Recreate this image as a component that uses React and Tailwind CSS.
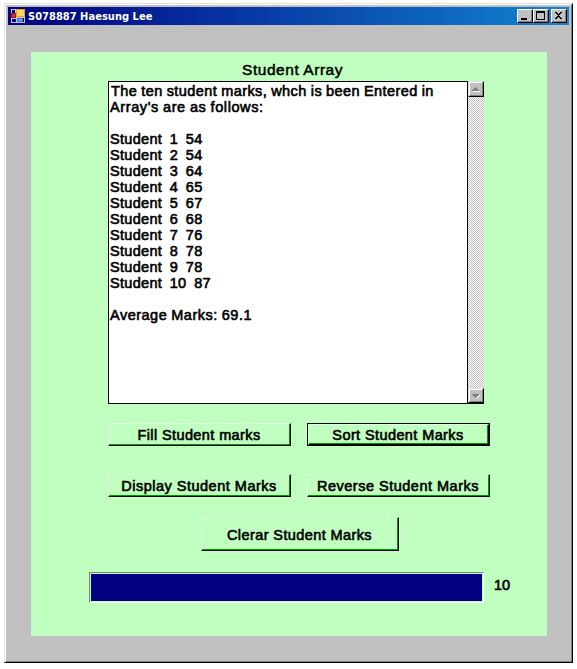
import React from 'react';

const marks = [54, 54, 64, 65, 67, 68, 76, 78, 78, 87];

function Button({ className, label, isDefault = false }) {
  const face = (
    <div className="h-full border border-t-[#e0ffe0] border-l-[#e0ffe0] border-r-black border-b-black">
      <div className="flex h-full items-center justify-center border-r border-b border-[#009800]">
        <span className="pt-0.5">{label}</span>
      </div>
    </div>
  );
  return (
    <button className={`block whitespace-pre ${isDefault ? 'border border-black' : ''} ${className}`}>{face}</button>
  );
}

function CaptionButton({ children }) {
  return (
    <button className="h-[14px] w-4 border border-t-white border-l-white border-r-black border-b-black bg-[#c0c0c0]">
      <div className="h-full border-r border-b border-[#808080]">
        <svg className="block" width="13" height="11" shapeRendering="crispEdges">{children}</svg>
      </div>
    </button>
  );
}

function ScrollButton({ up = false, className }) {
  return (
    <button className={`block w-4 border border-t-[#dfdfdf] border-l-[#dfdfdf] border-r-black border-b-black bg-[#c0c0c0] ${className}`}>
      <div className="h-full border border-t-white border-l-white border-r-[#808080] border-b-[#808080]">
        <svg className="block" width="12" height="11" shapeRendering="crispEdges">
          {up ? (
            <>
              <path d="M3 8h7v1H3z" fill="#fff" />
              <path d="M5 4h1v1h1v1h1v1h1v1H2V7h1V6h1V5h1z" fill="#808080" />
            </>
          ) : (
            <>
              <path d="M9 5h1v1H9v1H8v1H7v1H6V8h1V7h1V6h1z" fill="#fff" />
              <path d="M2 4h7v1H8v1H7v1H6v1H5V7H4V6H3V5H2z" fill="#808080" />
            </>
          )}
        </svg>
      </div>
    </button>
  );
}

export default function App() {
  return (
    <div className="h-[669px] w-[577px] bg-white pt-[3px] pl-1 font-['Liberation_Sans',Arial,sans-serif] text-[14.5px] leading-4 text-black">
      <div className="h-[660px] w-[569px] border border-t-[#dfdfdf] border-l-[#dfdfdf] border-r-black border-b-black">
        <div className="h-full border border-t-white border-l-white border-r-[#808080] border-b-[#808080] bg-[#c0c0c0] px-0.5 pt-0.5">
          <header className="flex h-[18px] w-[561px] items-center bg-linear-to-r/srgb from-[#000080] to-[#1084d0] pr-0.5 pl-[3px]">
            <svg width="14" height="14" shapeRendering="crispEdges">
              <path d="M0 0h14v14H0z" fill="#c8c8d8" />
              <path d="M1 1h3v3H1z" fill="#000080" />
              <path d="M0 4h5v5H0z" fill="#a01818" />
              <path d="M1 5h3v3H1z" fill="#d83030" />
              <path d="M1 10h4v3H1z" fill="#000080" />
              <path d="M5 0h9v8H5z" fill="#e8a020" />
              <path d="M6 1h7v6H6z" fill="#ffd860" />
              <path d="M6 9h6v4H6z" fill="#3070d0" />
              <path d="M7 10h4v2H7z" fill="#70a8f0" />
              <path d="M12 9h1v4h-1z" fill="#000080" />
            </svg>
            <h1 className="mt-px ml-[3px] font-['DejaVu_Sans_Condensed','DejaVu_Sans',sans-serif] text-[11px] font-bold tracking-[0.03px] whitespace-nowrap text-white">S078887 Haesung Lee</h1>
            <div className="ml-auto flex">
              <CaptionButton><path d="M3 8h6v2H3z" /></CaptionButton>
              <CaptionButton><path d="M2 1h9v9H2zM3 3v6h7V3z" fillRule="evenodd" /></CaptionButton>
              <div className="w-0.5" />
              <CaptionButton>
                <path d="M3 2h2v1h1v1h1V3h1V2h2v1H9v1H8v1H7v1h1v1h1v1h1v1H8V8H7V7H6v1H5v1H3V8h1V7h1V6h1V5H5V4H4V3H3z" />
              </CaptionButton>
            </div>
          </header>
          <main className="mt-[27px] ml-[23px] h-[584px] w-[516px] bg-[#c0ffc0] pt-[10px]">
            <h2 className="ml-[211px] h-[19px] text-[15.5px] whitespace-pre tracking-[0.55px] [-webkit-text-stroke:0.5px_black]">Student Array</h2>
            <section className="ml-[77px] flex h-[323px] w-[376px] border-b border-black">
              <div className="w-[360px] border-x border-t border-black bg-white pt-px pl-px font-normal whitespace-pre tracking-[0.3px] [word-spacing:-0.5px] [-webkit-text-stroke:0.6px_black]">
                <p className="pl-px tracking-[0.43px]">The ten student marks, whch is been Entered in</p>
                <p className="tracking-[0.6px]">Array's are as follows:</p>
                <ul className="mt-4">
                  {marks.map((mark, i) => (
                    <li key={i}>{`Student  ${i + 1}  ${mark}`}</li>
                  ))}
                </ul>
                <p className="mt-4 tracking-[0.5px]">Average Marks: 69.1</p>
              </div>
              <div className="flex w-4 flex-col justify-between bg-[repeating-conic-gradient(#c0c0c0_0_25%,white_0_50%)] bg-size-[2px_2px]">
                <ScrollButton up className="h-4" />
                <ScrollButton className="h-[15px]" />
              </div>
            </section>
            <div className="tracking-[0.4px] [-webkit-text-stroke:0.6px_black]">
              <div className="mt-[19px] ml-[77px] flex gap-4">
                <Button className="h-[23px] w-[183px]" label="Fill Student marks" />
                <Button className="h-[23px] w-[183px]" label="Sort Student Marks" isDefault />
              </div>
              <div className="mt-7 ml-[77px] flex gap-4 tracking-[0.5px]">
                <Button className="h-[23px] w-[183px]" label="Display Student Marks" />
                <Button className="h-[23px] w-[183px]" label="Reverse Student Marks" />
              </div>
              <Button className="mt-5 ml-[170px] h-[34px] w-[198px]" label="Clerar Student Marks" />
              <div className="mt-[21px] ml-[58px] flex">
                <div className="h-[31px] w-[395px] border border-t-[#808080] border-l-[#808080] border-r-white border-b-white p-px">
                  <div className="h-[27px] bg-[#000080]" />
                </div>
                <span className="mt-[5px] ml-[10px] tracking-normal">10</span>
              </div>
            </div>
          </main>
        </div>
      </div>
    </div>
  );
}
